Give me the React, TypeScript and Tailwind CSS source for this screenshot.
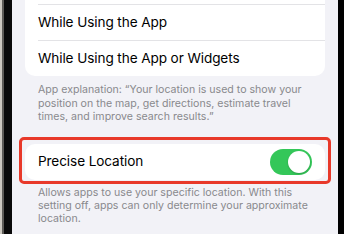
import React, { useState } from 'react';

export default function App() {
  const [precise, setPrecise] = useState(true);

  return (
    <div
      className="w-[344px] h-[234px] overflow-hidden flex bg-black"
      style={{ fontFamily: 'Inter, "Liberation Sans", sans-serif' }}
    >
      {/* Left bezel */}
      <div className="flex h-full shrink-0">
        <div className="w-[2px] bg-[#cdc9c1]" />
        <div className="w-[2px] bg-[#5e5c58]" />
        <div className="w-[8px] bg-[#0a0a0a]" />
      </div>

      {/* Screen */}
      <div className="flex-1 h-full bg-[#f2f2f7] px-[13px]">
        {/* Access options (top row scrolled out of view) */}
        <div className="-mt-[32px] bg-white rounded-[10px] overflow-hidden">
          <div className="h-[36px]" />
          {['While Using the App', 'While Using the App or Widgets'].map((label) => (
            <div key={label} className="pl-[13px]">
              <div className="h-[36px] flex items-center border-t border-[#e3e3e6] text-[13.6px] text-black tracking-[-0.1px]">
                {label}
              </div>
            </div>
          ))}
        </div>

        <p className="mt-[7px] px-[13px] text-[10.6px] leading-[13.5px] text-[#89898d]">
          App explanation: “Your location is used to show your position on the map, get directions, estimate travel
          times, and improve search results.”
        </p>

        {/* Precise Location */}
        <div className="relative mt-[20px]">
          <div className="h-[36px] bg-white rounded-[10px] flex items-center justify-between pl-[13px] pr-[13px]">
            <span className="text-[13.6px] text-black tracking-[-0.1px]">Precise Location</span>
            <button
              onClick={() => setPrecise(!precise)}
              className={`w-[42px] h-[26px] rounded-full p-[2px] flex items-center ${
                precise ? 'bg-[#34c759] justify-end' : 'bg-[#e9e9eb] justify-start'
              }`}
            >
              <span className="w-[22px] h-[22px] rounded-full bg-white shadow-[0_1px_2px_rgba(0,0,0,0.2)]" />
            </button>
          </div>
          <div className="absolute -left-[6px] -right-[6px] -top-[7px] -bottom-[4px] border-[3px] border-[#e8392a] rounded-[5px] pointer-events-none" />
        </div>

        <p className="mt-[6px] px-[13px] text-[10.6px] leading-[13px] text-[#89898d]">
          Allows apps to use your specific location. With this setting off, apps can only determine your approximate
          location.
        </p>
      </div>

      {/* Right bezel */}
      <div className="w-[6px] h-full shrink-0 bg-black" />
    </div>
  );
}
